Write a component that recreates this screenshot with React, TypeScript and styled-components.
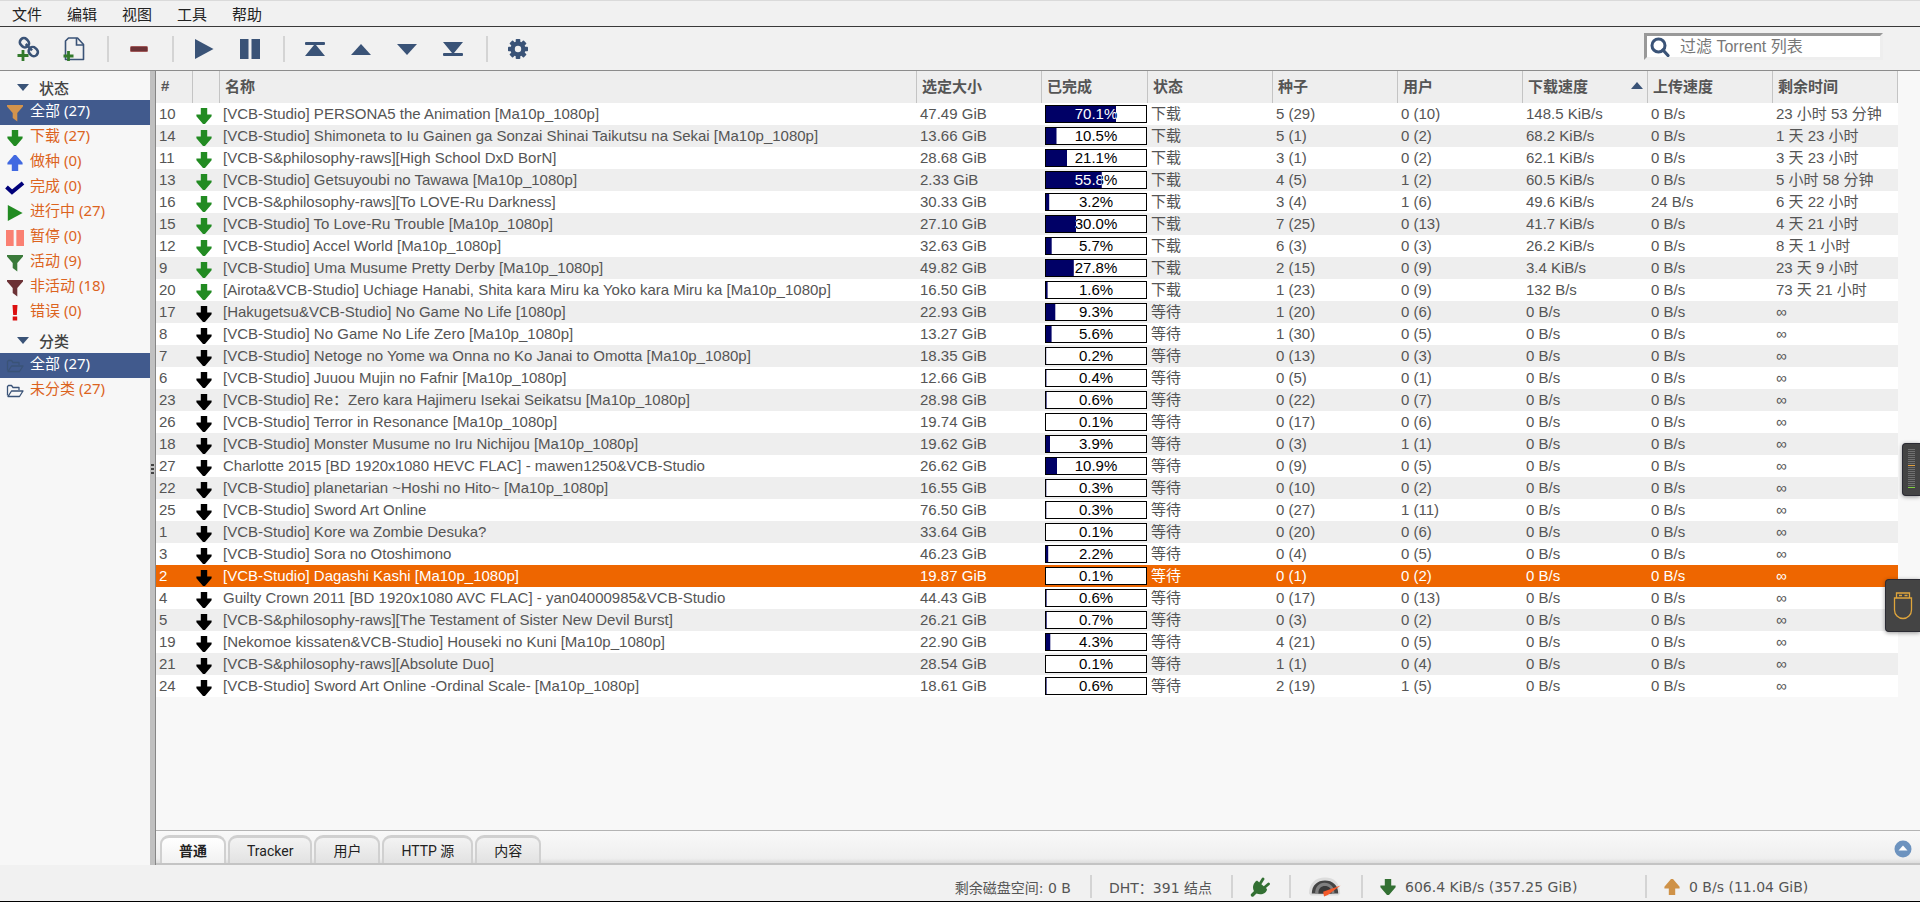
import React from "react";
import styled, { createGlobalStyle, css } from "styled-components";

const sans = `"Liberation Sans", "Noto Sans CJK SC", sans-serif`;
const ui = `"Noto Sans", "Noto Sans CJK SC", sans-serif`;

const GlobalStyle = createGlobalStyle`
  *, *::before, *::after { box-sizing: border-box; }
  body { margin: 0; background: #f1f1f1; font-family: ${sans}; font-size: 15px; color: #555; }
  button { border: 0; padding: 0; background: none; color: inherit; font: inherit; cursor: pointer; }
  svg { display: block; }
`;

const Page = styled.div`
  display: flex;
  flex-direction: column;
  height: 100vh;
  border-top: 1px solid #dadada;
  border-bottom: 1px solid #000;
`;

const MenuBar = styled.nav`
  display: flex;
  gap: 25px;
  height: 26px;
  padding: 1px 12px 0;
  border-bottom: 1px solid #3a3a3a;
`;

const MenuItem = styled.button`
  font-family: ${ui};
  font-size: 15px;
  line-height: 24px;
  color: #222;
`;

const Toolbar = styled.div`
  display: flex;
  align-items: center;
  height: 44px;
  padding: 0 37px 0 5px;
  border-bottom: 1px solid #8c8c8c;
`;

const ToolButton = styled.button`
  display: flex;
  align-items: center;
  justify-content: center;
  width: 46px;
  height: 40px;
`;

const ToolDivider = styled.span`
  width: 2px;
  height: 26px;
  margin: 0 7px 0 10px;
  background: #d4d4d4;
`;

const SearchBox = styled.label`
  display: flex;
  align-items: center;
  width: 239px;
  height: 27px;
  margin: 0 0 4px auto;
  padding-left: 3px;
  gap: 10px;
  background: #fff;
  border: 3px solid;
  border-color: #999 #eee #eee #999;
`;

const SearchInput = styled.input`
  flex: 1;
  min-width: 0;
  padding: 0;
  border: 0;
  outline: 0;
  background: transparent;
  font-family: ${sans};
  font-size: 16px;
  line-height: 20px;
  &::placeholder { color: #777; opacity: 1; }
`;

const Body = styled.div`
  display: flex;
  flex: 1;
  min-height: 0;
`;

const Sidebar = styled.aside`
  flex: none;
  width: 150px;
  padding-top: 1px;
  background: #f7f7f7;
  overflow: hidden;
`;

const SideTitle = styled.button`
  display: flex;
  align-items: center;
  gap: 10px;
  width: 100%;
  height: 28px;
  padding: 3px 0 0 17px;
  font-family: ${ui};
  font-weight: 500;
  line-height: 24px;
  color: #444;
`;

const SideList = styled.ul`
  margin: 0;
  padding: 0;
  list-style: none;
`;

const SideLink = styled.a<{ $active?: boolean }>`
  display: flex;
  align-items: center;
  gap: 6px;
  height: 25px;
  padding-left: 6px;
  font-family: ${ui};
  line-height: 20px;
  text-decoration: none;
  color: ${(p) => (p.$active ? "#fff" : "#dc641e")};
  background: ${(p) => (p.$active ? "#415a8d" : "transparent")};
`;

const SideLabel = styled.span`
  padding-bottom: 5px;
`;

const IconSlot = styled.span`
  display: flex;
  justify-content: center;
  width: 18px;
  svg { flex: none; }
`;

const Splitter = styled.div`
  display: flex;
  flex: none;
  flex-direction: column;
  justify-content: center;
  gap: 2px;
  width: 6px;
  padding-top: 2px;
  background: #c0c0c0;
  border-right: 1px solid #868686;
`;

const Grip = styled.i`
  width: 3px;
  height: 2px;
  margin-left: 1px;
  background: #444;
`;

const Main = styled.main`
  display: flex;
  flex: 1;
  flex-direction: column;
  min-width: 0;
`;

const TableArea = styled.div`
  flex: 1;
  min-height: 0;
  padding-right: 22px;
  background: #f8f8f8;
  overflow: hidden;
`;

const Table = styled.table`
  width: 100%;
  table-layout: fixed;
  border-collapse: separate;
  border-spacing: 0;
`;

const Col = styled.col<{ $w?: number }>`
  width: ${(p) => (p.$w ? `${p.$w}px` : "auto")};
`;

const Th = styled.th`
  height: 32px;
  padding: 0 4px 3px 5px;
  text-align: left;
  font-weight: 700;
  color: #555;
  background: #eee;
  border-right: 1px solid #c4c4c4;
`;

const ThInner = styled.div`
  display: flex;
  align-items: center;
  justify-content: space-between;
`;

const Row = styled.tr<{ $selected: boolean }>`
  background: #fff;
  &:nth-child(even) { background: #eee; }
  ${(p) => p.$selected && css`
    color: #fff;
    &&& { background: #ee6600; }
  `}
`;

const Td = styled.td`
  height: 22px;
  padding: 0 0 0 3px;
  line-height: 22px;
  white-space: nowrap;
  overflow: hidden;
`;

const StateTd = styled(Td)`
  padding: 3px 0 0 3px;
`;

const Bar = styled.div`
  position: relative;
  width: 102px;
  height: 18px;
  border: 1px solid #000;
  background: #fff;
  color: #000;
  text-align: center;
  line-height: 16px;
`;

const BarFill = styled.div`
  position: absolute;
  inset: 0;
  background: #006;
  color: #fff;
`;

const TabBar = styled.div`
  display: flex;
  align-items: flex-end;
  height: 35px;
  padding: 0 8px 0 4px;
  border-top: 1px solid #b4b4b4;
  border-bottom: 2px solid #c4c4c4;
  background: linear-gradient(#f9f9f9, #efefef 85%, #dedede);
`;

const Tabs = styled.div`
  display: flex;
  flex: 1;
  gap: 2px;
`;

const Tab = styled.button<{ $active?: boolean }>`
  height: 28px;
  padding: 0 17px;
  border: 3px solid #d0d0d0;
  border-width: 3px 2px 0;
  border-radius: 9px 9px 0 0;
  background: ${(p) => (p.$active ? "linear-gradient(#fff, #f1f1f1)" : "linear-gradient(#f3f3f3, #e2e2e2)")};
  font-family: Roboto, "Noto Sans CJK SC", sans-serif;
  font-size: 14px;
  font-weight: ${(p) => (p.$active ? 700 : 400)};
  line-height: 22px;
  color: #222;
`;

const Collapse = styled.button`
  align-self: center;
  padding-top: 3px;
`;

const StatusBar = styled.footer`
  display: flex;
  justify-content: flex-end;
  align-items: center;
  height: 36px;
  padding-top: 7px;
  font-family: "DejaVu Sans", "Noto Sans CJK SC", sans-serif;
  font-size: 14px;
`;

const StatusCell = styled.div<{ $w?: number }>`
  display: flex;
  align-items: center;
  gap: 9px;
  width: ${(p) => (p.$w ? `${p.$w}px` : "auto")};
  height: 23px;
  padding: 0 19px 0 17px;
  white-space: nowrap;
  & + & { border-left: 2px solid #d4d4d4; }
`;

const SideGadget = styled.div<{ $top: string; $w: number }>`
  position: fixed;
  right: 0;
  top: ${(p) => p.$top};
  display: flex;
  align-items: center;
  justify-content: center;
  width: ${(p) => p.$w}px;
  height: 53px;
  border: 1px solid #2b2b33;
  border-right: 0;
  border-radius: 4px 0 0 4px;
  background: #444;
  box-shadow: 0 1px 4px rgba(0, 0, 0, 0.4);
`;

const navy = "#3a5377";

const ArrowDown = ({ c }: { c: string }) => (
  <svg width="16" height="16" viewBox="0 0 16 16"><path d="M4.800 0h6.400v6.500h4.400v1.700L9 16H7L.4 8.200V6.500h4.400z" fill={c} /></svg>
);
const ArrowUp = ({ c }: { c: string }) => (
  <svg width="16" height="16" viewBox="0 0 16 16"><path d="M4.800 16h6.400V9.500h4.400V7.800L9 0H7L.4 7.800v1.700h4.400z" fill={c} /></svg>
);
const Funnel = ({ c }: { c: string }) => (
  <svg width="18" height="18" viewBox="0 0 18 18"><path d="M1 1h16v1.500L11.300 9v8.500L6.700 14V9L1 2.500z" fill={c} /></svg>
);
const Folder = ({ c }: { c: string }) => (
  <svg width="18" height="16" viewBox="0 0 18 16" fill="none" stroke={c} strokeWidth="1.300" strokeLinejoin="round">
    <path d="M1.500 12.500V3.500l1-1h3l1.500 2h6v2.500M2 13.500l3.500-5.500h11.500l-3.500 5.500z" />
  </svg>
);
const Triangle = ({ up, w = 12 }: { up?: boolean; w?: number }) => (
  <svg width={w} height="7" viewBox="0 0 12 7" preserveAspectRatio="none">
    <path d={up ? "M6 0l6 7H0z" : "M0 0h12L6 7z"} fill={navy} />
  </svg>
);

const AddLink = () => (
  <svg width="26" height="26" viewBox="0 0 26 26" fill="none">
    <g transform="rotate(45 14 11)" stroke={navy} strokeWidth="2.600">
      <rect x="3" y="7.200" width="9.500" height="8" rx="3.800" />
      <rect x="15.500" y="7.200" width="9.500" height="8" rx="3.800" />
      <path d="M9.500 11.200h9" />
    </g>
    <path d="M8 14v11M2.500 19.500h11" stroke="#337a2c" strokeWidth="2.800" />
  </svg>
);
const AddFile = () => (
  <svg width="24" height="26" viewBox="0 0 24 26" fill="none">
    <path d="M3.500 23.500V5l3-3h9l6 6.500v15z" stroke={navy} strokeWidth="1.600" strokeLinejoin="round" />
    <path d="M14.500 2v7h7" stroke={navy} strokeWidth="1.600" />
    <path d="M6.500 15v10M1.500 20h10" stroke="#337a2c" strokeWidth="2.800" />
  </svg>
);
const Minus = () => (
  <svg width="18" height="6" viewBox="0 0 18 6"><rect width="18" height="6" rx="1.500" fill="#a05858" /><rect x="1" y="1" width="16" height="4" fill="#6c3236" /></svg>
);
const Play = ({ c = navy, s = 20 }: { c?: string; s?: number }) => (
  <svg width={s} height={s} viewBox="0 0 20 20"><path d="M1 0l18.500 10L1 20z" fill={c} /></svg>
);
const Pause = ({ c = navy, w = 20, h = 20 }: { c?: string; w?: number; h?: number }) => (
  <svg width={w} height={h} viewBox="0 0 20 20" preserveAspectRatio="none"><path d="M0 0h8.500v20H0zM11.500 0H20v20h-8.500z" fill={c} /></svg>
);
const Mover = ({ d }: { d: string }) => (
  <svg width="20" height="16" viewBox="0 0 20 16"><path d={d} fill={navy} /></svg>
);
const Gear = () => (
  <svg width="20" height="20" viewBox="-10 -10 20 20">
    <g fill={navy}>
      {[0, 45, 90, 135].map((a) => (
        <rect key={a} x="-2.300" y="-10" width="4.600" height="20" rx="0.800" transform={`rotate(${a})`} />
      ))}
      <circle r="7.600" />
    </g>
    <circle r="3.200" fill="#f1f1f1" />
  </svg>
);
const Glass = () => (
  <svg width="20" height="20" viewBox="0 0 20 20" fill="none" stroke={navy}>
    <circle cx="8.500" cy="8.500" r="6.500" strokeWidth="3" />
    <path d="M13 13l5 5.500" strokeWidth="3.200" strokeLinecap="round" />
  </svg>
);
const Check = () => (
  <svg width="20" height="14" viewBox="0 0 20 14"><path d="M1.500 6l5.500 5L18 2" fill="none" stroke="#00007a" strokeWidth="4" /></svg>
);
const Bang = () => (
  <svg width="18" height="17" viewBox="0 0 18 17" fill="#dc1010"><path d="M6.500 1h5l-.7 10H7.200zM6.700 12.500h4.500V16.500H6.700z" /></svg>
);
const Plug = () => (
  <svg width="20" height="20" viewBox="0 0 20 20">
    <g stroke="#337033" strokeLinecap="round">
      <path d="M2.500 18l4-4" strokeWidth="3.400" />
      <path d="M10.500 6l2.500-4M15 10l3.500-3" strokeWidth="2.800" />
    </g>
    <path d="M7 3.500L17 12c-.5 4.500-6 6.500-10.500 4.500L4 14C2 10.500 3 6 7 3.500z" fill="#337033" />
  </svg>
);
const Gauge = () => (
  <svg width="36" height="22" viewBox="0 0 36 22">
    <path d="M1 18C1 7 8 1 18 1s16 6 16 17l-2 2H3z" fill="#dcdcdc" />
    <path d="M4 18C4 9 10 4 18 4s14 5 14 14z" fill="#444" />
    <path d="M7.500 18c0-7 4-11.500 10-11.500S28 11 28 18z" fill="#808080" />
    <path d="M11 18c0-6 3-8 7-8s7 2 7 8z" fill="#3a3a3a" />
    <path d="M34.500 9.500L21 19.500l-4 1.500-1-5z" fill="#f4592a" />
  </svg>
);

const statuses: { label: string; icon: React.ReactNode }[] = [
  { label: "全部 (27)", icon: <Funnel c="#d3934c" /> },
  { label: "下载 (27)", icon: <ArrowDown c="#228b22" /> },
  { label: "做种 (0)", icon: <ArrowUp c="#4169e1" /> },
  { label: "完成 (0)", icon: <Check /> },
  { label: "进行中 (27)", icon: <Play c="#228b22" s={16} /> },
  { label: "暂停 (0)", icon: <Pause c="#fa8072" w={18} h={16} /> },
  { label: "活动 (9)", icon: <Funnel c="#3a7a3a" /> },
  { label: "非活动 (18)", icon: <Funnel c="#6c3236" /> },
  { label: "错误 (0)", icon: <Bang /> },
];

type Torrent = [number, string, string, number, string, string, string, string, string];
const torrents: Torrent[] = [
  [10, "[VCB-Studio] PERSONA5 the Animation [Ma10p_1080p]", "47.49", 70.1, "5 (29)", "0 (10)", "148.5 KiB/s", "0 B/s", "23 小时 53 分钟"],
  [14, "[VCB-Studio] Shimoneta to Iu Gainen ga Sonzai Shinai Taikutsu na Sekai [Ma10p_1080p]", "13.66", 10.5, "5 (1)", "0 (2)", "68.2 KiB/s", "0 B/s", "1 天 23 小时"],
  [11, "[VCB-S&philosophy-raws][High School DxD BorN]", "28.68", 21.1, "3 (1)", "0 (2)", "62.1 KiB/s", "0 B/s", "3 天 23 小时"],
  [13, "[VCB-Studio] Getsuyoubi no Tawawa [Ma10p_1080p]", "2.33", 55.8, "4 (5)", "1 (2)", "60.5 KiB/s", "0 B/s", "5 小时 58 分钟"],
  [16, "[VCB-S&philosophy-raws][To LOVE-Ru Darkness]", "30.33", 3.2, "3 (4)", "1 (6)", "49.6 KiB/s", "24 B/s", "6 天 22 小时"],
  [15, "[VCB-Studio] To Love-Ru Trouble [Ma10p_1080p]", "27.10", 30.0, "7 (25)", "0 (13)", "41.7 KiB/s", "0 B/s", "4 天 21 小时"],
  [12, "[VCB-Studio] Accel World [Ma10p_1080p]", "32.63", 5.7, "6 (3)", "0 (3)", "26.2 KiB/s", "0 B/s", "8 天 1 小时"],
  [9, "[VCB-Studio] Uma Musume Pretty Derby [Ma10p_1080p]", "49.82", 27.8, "2 (15)", "0 (9)", "3.4 KiB/s", "0 B/s", "23 天 9 小时"],
  [20, "[Airota&VCB-Studio] Uchiage Hanabi, Shita kara Miru ka Yoko kara Miru ka [Ma10p_1080p]", "16.50", 1.6, "1 (23)", "0 (9)", "132 B/s", "0 B/s", "73 天 21 小时"],
  [17, "[Hakugetsu&VCB-Studio] No Game No Life [1080p]", "22.93", 9.3, "1 (20)", "0 (6)", "0 B/s", "0 B/s", "∞"],
  [8, "[VCB-Studio] No Game No Life Zero [Ma10p_1080p]", "13.27", 5.6, "1 (30)", "0 (5)", "0 B/s", "0 B/s", "∞"],
  [7, "[VCB-Studio] Netoge no Yome wa Onna no Ko Janai to Omotta [Ma10p_1080p]", "18.35", 0.2, "0 (13)", "0 (3)", "0 B/s", "0 B/s", "∞"],
  [6, "[VCB-Studio] Juuou Mujin no Fafnir [Ma10p_1080p]", "12.66", 0.4, "0 (5)", "0 (1)", "0 B/s", "0 B/s", "∞"],
  [23, "[VCB-Studio] Re：Zero kara Hajimeru Isekai Seikatsu [Ma10p_1080p]", "28.98", 0.6, "0 (22)", "0 (7)", "0 B/s", "0 B/s", "∞"],
  [26, "[VCB-Studio] Terror in Resonance [Ma10p_1080p]", "19.74", 0.1, "0 (17)", "0 (6)", "0 B/s", "0 B/s", "∞"],
  [18, "[VCB-Studio] Monster Musume no Iru Nichijou [Ma10p_1080p]", "19.62", 3.9, "0 (3)", "1 (1)", "0 B/s", "0 B/s", "∞"],
  [27, "Charlotte 2015 [BD 1920x1080 HEVC FLAC] - mawen1250&VCB-Studio", "26.62", 10.9, "0 (9)", "0 (5)", "0 B/s", "0 B/s", "∞"],
  [22, "[VCB-Studio] planetarian ~Hoshi no Hito~ [Ma10p_1080p]", "16.55", 0.3, "0 (10)", "0 (2)", "0 B/s", "0 B/s", "∞"],
  [25, "[VCB-Studio] Sword Art Online", "76.50", 0.3, "0 (27)", "1 (11)", "0 B/s", "0 B/s", "∞"],
  [1, "[VCB-Studio] Kore wa Zombie Desuka?", "33.64", 0.1, "0 (20)", "0 (6)", "0 B/s", "0 B/s", "∞"],
  [3, "[VCB-Studio] Sora no Otoshimono", "46.23", 2.2, "0 (4)", "0 (5)", "0 B/s", "0 B/s", "∞"],
  [2, "[VCB-Studio] Dagashi Kashi [Ma10p_1080p]", "19.87", 0.1, "0 (1)", "0 (2)", "0 B/s", "0 B/s", "∞"],
  [4, "Guilty Crown 2011 [BD 1920x1080 AVC FLAC] - yan04000985&VCB-Studio", "44.43", 0.6, "0 (17)", "0 (13)", "0 B/s", "0 B/s", "∞"],
  [5, "[VCB-S&philosophy-raws][The Testament of Sister New Devil Burst]", "26.21", 0.7, "0 (3)", "0 (2)", "0 B/s", "0 B/s", "∞"],
  [19, "[Nekomoe kissaten&VCB-Studio] Houseki no Kuni [Ma10p_1080p]", "22.90", 4.3, "4 (21)", "0 (5)", "0 B/s", "0 B/s", "∞"],
  [21, "[VCB-S&philosophy-raws][Absolute Duo]", "28.54", 0.1, "1 (1)", "0 (4)", "0 B/s", "0 B/s", "∞"],
  [24, "[VCB-Studio] Sword Art Online -Ordinal Scale- [Ma10p_1080p]", "18.61", 0.6, "2 (19)", "1 (5)", "0 B/s", "0 B/s", "∞"],
];

const columns: { label: string; w?: number; sorted?: boolean }[] = [
  { label: "#", w: 37 },
  { label: "", w: 27 },
  { label: "名称" },
  { label: "选定大小", w: 125 },
  { label: "已完成", w: 106 },
  { label: "状态", w: 125 },
  { label: "种子", w: 125 },
  { label: "用户", w: 125 },
  { label: "下载速度", w: 125, sorted: true },
  { label: "上传速度", w: 125 },
  { label: "剩余时间", w: 125 },
];

const Progress = ({ value }: { value: number }) => {
  const text = `${value.toFixed(1)}%`;
  return (
    <Bar role="progressbar" aria-valuenow={value}>
      {text}
      <BarFill aria-hidden style={{ clipPath: `inset(0 ${100 - value}% 0 0)` }}>{text}</BarFill>
    </Bar>
  );
};

export default function App() {
  return (
    <Page>
      <GlobalStyle />
      <MenuBar>
        {["文件", "编辑", "视图", "工具", "帮助"].map((m) => <MenuItem key={m}>{m}</MenuItem>)}
      </MenuBar>

      <Toolbar>
        <ToolButton aria-label="添加链接"><AddLink /></ToolButton>
        <ToolButton aria-label="添加文件"><AddFile /></ToolButton>
        <ToolDivider />
        <ToolButton aria-label="删除"><Minus /></ToolButton>
        <ToolDivider />
        <ToolButton aria-label="继续"><Play /></ToolButton>
        <ToolButton aria-label="暂停"><Pause /></ToolButton>
        <ToolDivider />
        <ToolButton aria-label="移至顶部"><Mover d="M1 1h18q1 0 1 1v1q0 1-1 1h-8l9 11H0L9 4H1q-1 0-1-1V2q0-1 1-1z" /></ToolButton>
        <ToolButton aria-label="上移"><Mover d="M10 3l10 11H0z" /></ToolButton>
        <ToolButton aria-label="下移"><Mover d="M0 3h20L10 14z" /></ToolButton>
        <ToolButton aria-label="移至底部"><Mover d="M0 1h20L11 12h8q1 0 1 1v1q0 1-1 1H1q-1 0-1-1v-1q0-1 1-1h8z" /></ToolButton>
        <ToolDivider />
        <ToolButton aria-label="选项"><Gear /></ToolButton>
        <SearchBox>
          <Glass />
          <SearchInput type="text" aria-label="过滤 Torrent 列表" placeholder="过滤 Torrent 列表" />
        </SearchBox>
      </Toolbar>

      <Body>
        <Sidebar>
          <SideTitle><Triangle />状态</SideTitle>
          <SideList>
            {statuses.map((s, i) => (
              <li key={s.label}>
                <SideLink href="#" $active={i === 0}><IconSlot>{s.icon}</IconSlot><SideLabel>{s.label}</SideLabel></SideLink>
              </li>
            ))}
          </SideList>
          <SideTitle><Triangle />分类</SideTitle>
          <SideList>
            <li><SideLink href="#" $active><IconSlot><Folder c="#3a5377" /></IconSlot><SideLabel>全部 (27)</SideLabel></SideLink></li>
            <li><SideLink href="#"><IconSlot><Folder c="#3a5377" /></IconSlot><SideLabel>未分类 (27)</SideLabel></SideLink></li>
          </SideList>
        </Sidebar>
        <Splitter><Grip /><Grip /><Grip /></Splitter>

        <Main>
          <TableArea>
            <Table>
              <colgroup>{columns.map((c, i) => <Col key={i} $w={c.w} />)}</colgroup>
              <thead>
                <tr>
                  {columns.map((c, i) => (
                    <Th key={i}><ThInner>{c.label}{c.sorted && <Triangle up />}</ThInner></Th>
                  ))}
                </tr>
              </thead>
              <tbody>
                {torrents.map(([n, name, size, done, seeds, peers, down, up, eta], i) => (
                  <Row key={n} $selected={n === 2}>
                    <Td>{n}</Td>
                    <StateTd><ArrowDown c={i < 9 ? "#228b22" : "#000"} /></StateTd>
                    <Td>{name}</Td>
                    <Td>{size} GiB</Td>
                    <Td><Progress value={done} /></Td>
                    <Td>{i < 9 ? "下载" : "等待"}</Td>
                    <Td>{seeds}</Td>
                    <Td>{peers}</Td>
                    <Td>{down}</Td>
                    <Td>{up}</Td>
                    <Td>{eta}</Td>
                  </Row>
                ))}
              </tbody>
            </Table>
          </TableArea>
          <TabBar>
            <Tabs role="tablist">
              {["普通", "Tracker", "用户", "HTTP 源", "内容"].map((t, i) => (
                <Tab key={t} role="tab" aria-selected={i === 0} $active={i === 0}>{t}</Tab>
              ))}
            </Tabs>
            <Collapse aria-label="展开">
              <svg width="18" height="18" viewBox="0 0 18 18"><circle cx="9" cy="9" r="8.500" fill="#6d93bf" /><path d="M9 5.500l4.500 5h-9z" fill="#fff" /></svg>
            </Collapse>
          </TabBar>
        </Main>
      </Body>

      <StatusBar>
        <StatusCell>剩余磁盘空间: 0 B</StatusCell>
        <StatusCell>DHT：391 结点</StatusCell>
        <StatusCell><Plug /></StatusCell>
        <StatusCell $w={72}><Gauge /></StatusCell>
        <StatusCell $w={284}><ArrowDown c="#337033" />606.4 KiB/s (357.25 GiB)</StatusCell>
        <StatusCell $w={275}><ArrowUp c="#cf9248" />0 B/s (11.04 GiB)</StatusCell>
      </StatusBar>

      <SideGadget $top="443px" $w={18}>
        <svg width="8" height="42" viewBox="0 0 8 42">
          {Array.from({ length: 20 }, (_, i) => (
            <rect key={i} x="0" y={i * 2} width="7" height="1" fill={i === 8 ? "#e0a040" : i === 19 ? "#7fd040" : "#707070"} />
          ))}
        </svg>
      </SideGadget>
      <SideGadget $top="579px" $w={35}>
        <svg width="20" height="28" viewBox="0 0 20 28" fill="none" stroke="#dfa53c" strokeWidth="1.300">
          <path d="M1.500 6h17v12a8.500 8.500 0 0 1-17 0zM3.500 6V1h13v5M6 3.500h3M11.500 3.500h3" />
        </svg>
      </SideGadget>
    </Page>
  );
}
